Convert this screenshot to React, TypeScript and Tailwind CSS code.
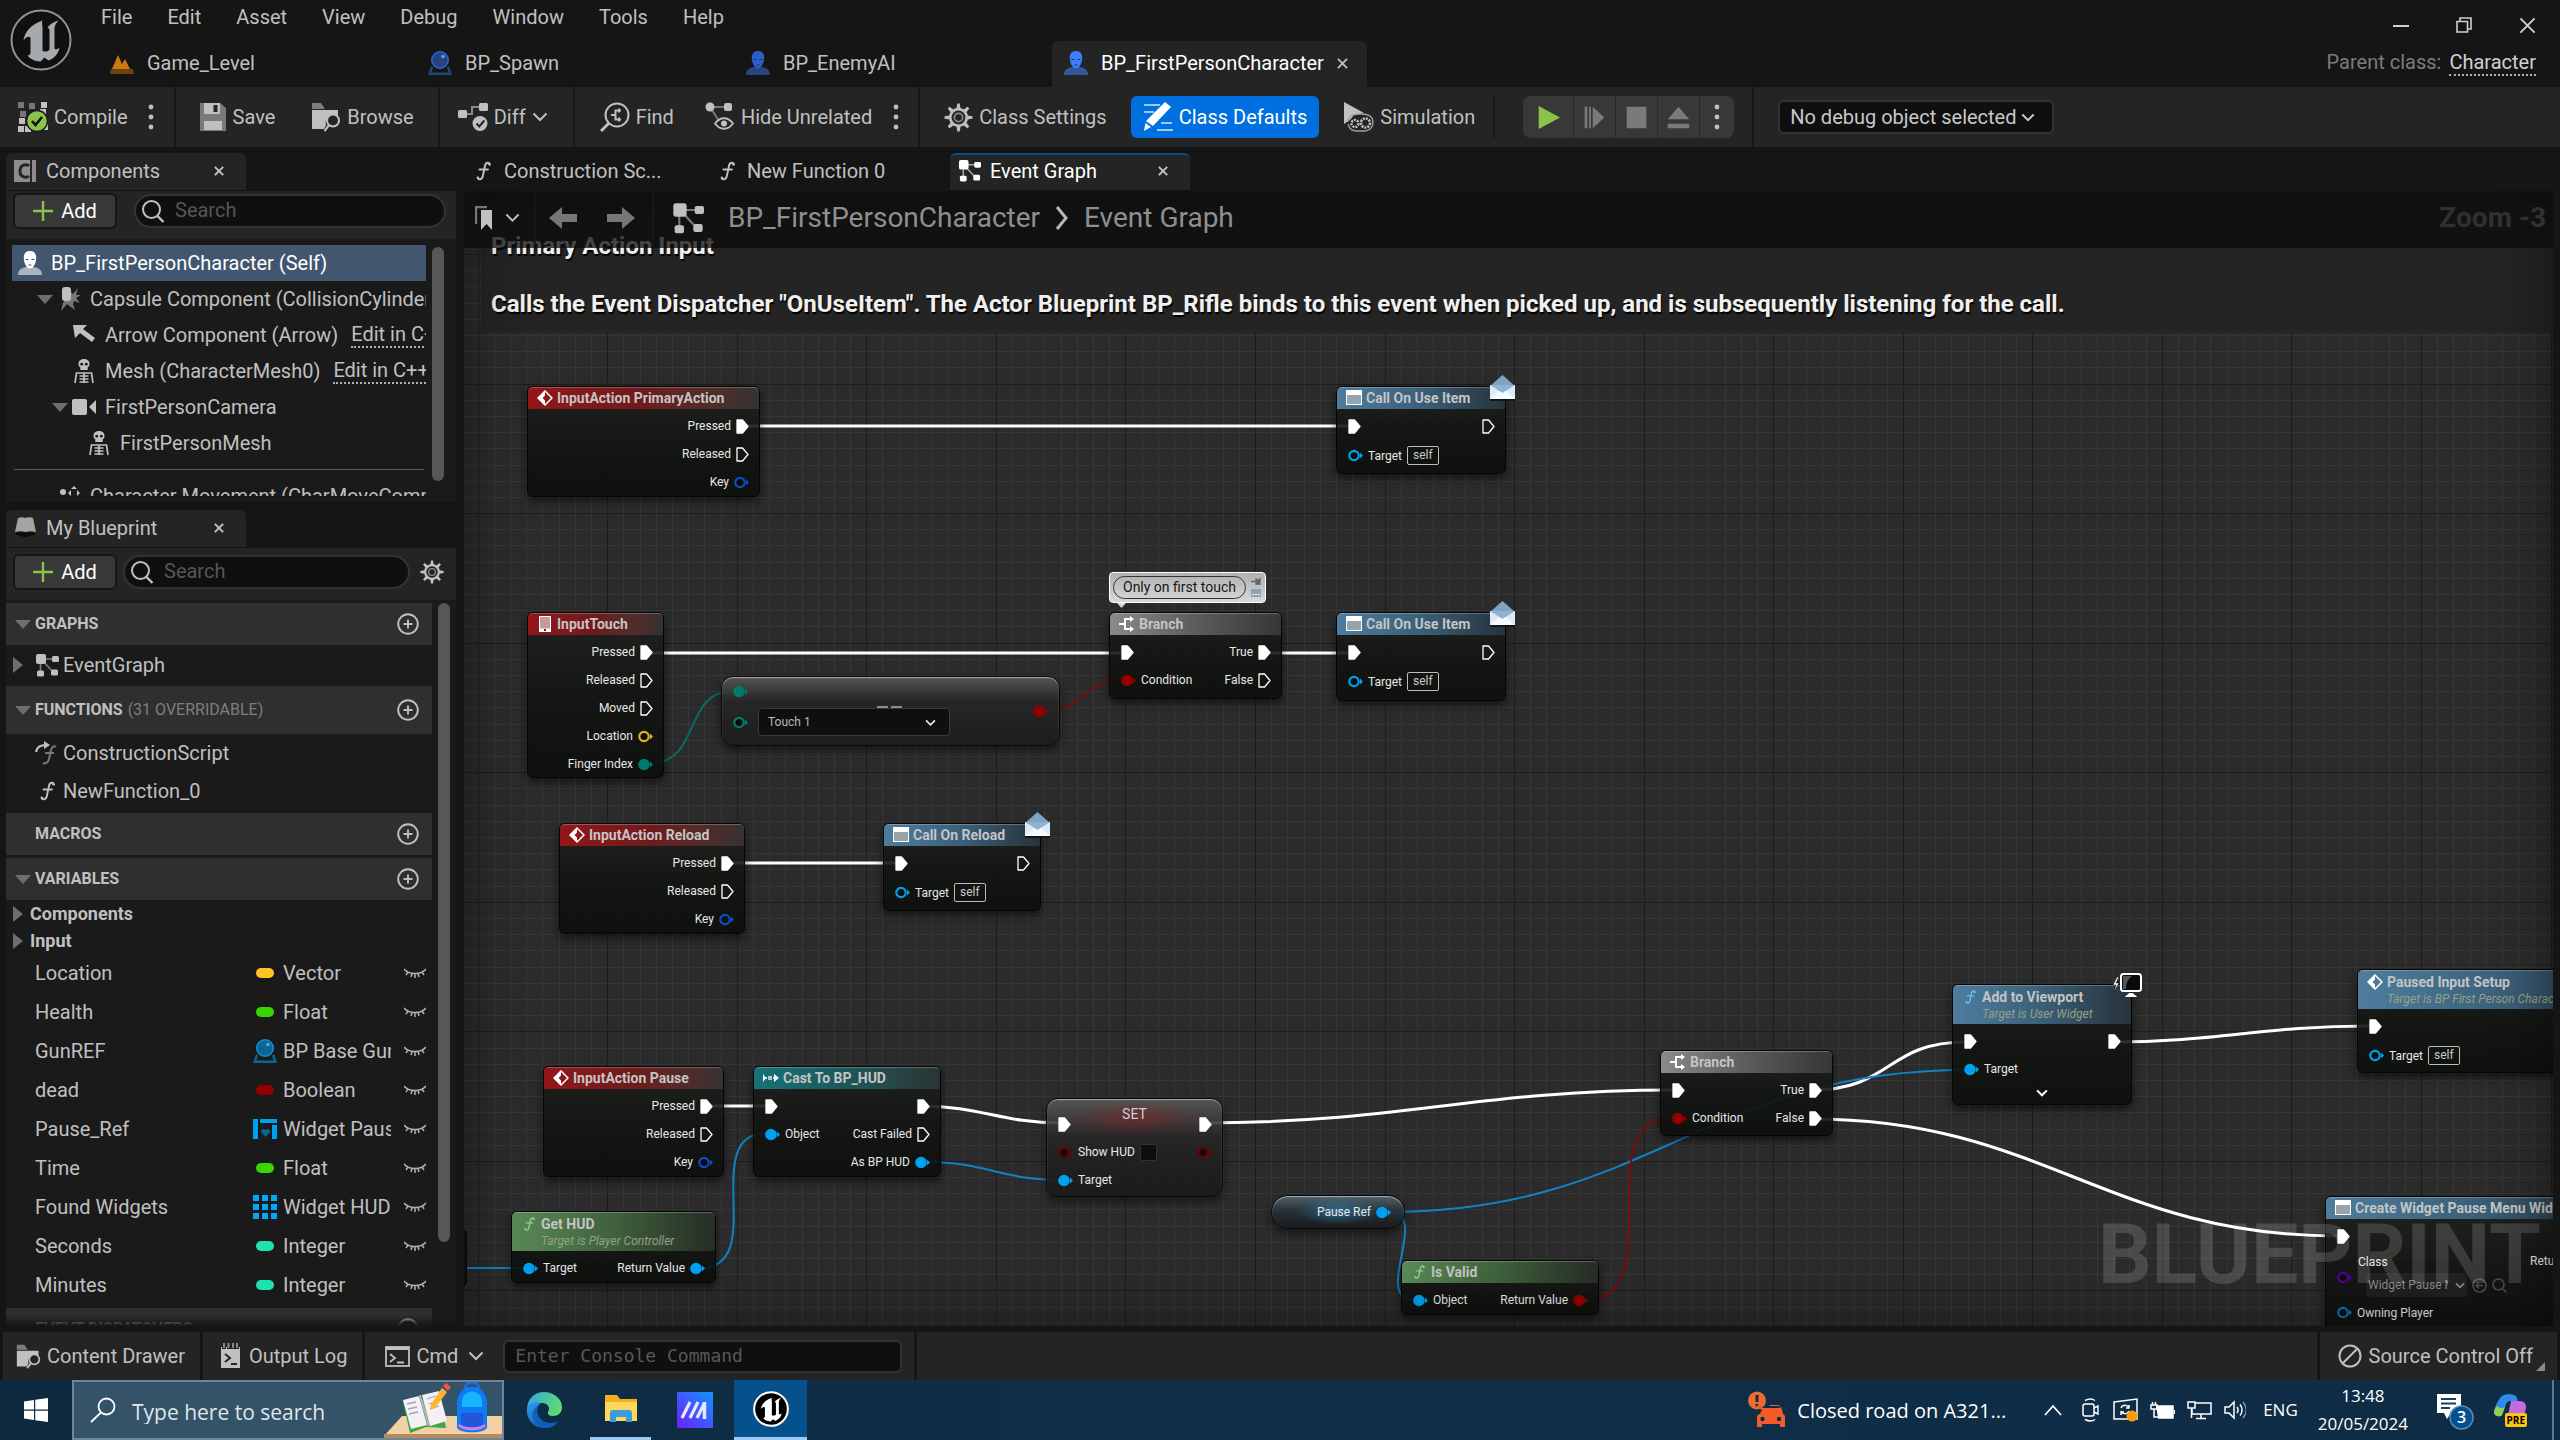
import React from "react";

type Kids = { children?: React.ReactNode };

/* ---------- generic icons ---------- */

function Svg({ w, h, vb, className = "", children }: { w: number; h: number; vb?: string; className?: string } & Kids) {
  return (
    <svg width={w} height={h} viewBox={vb ?? `0 0 ${w} ${h}`} className={`shrink-0 ${className}`} fill="none" aria-hidden="true">
      {children}
    </svg>
  );
}

const Chevron = ({ w = 16, sw = 2 }: { w?: number; sw?: number }) => (
  <Svg w={w} h={w / 2 + 2} vb="0 0 16 10"><path d="M1.5 1.5 8 8l6.500-6.500" stroke="currentColor" strokeWidth={sw} /></Svg>
);
const Dots = () => (
  <Svg w={6} h={26}>{[3, 13, 23].map((y) => <circle key={y} cx="3" cy={y} r="2.400" fill="#c0c0c0" />)}</Svg>
);
const Cross = ({ s = 11, sw = 2 }: { s?: number; sw?: number }) => (
  <Svg w={s} h={s} vb="0 0 12 12"><path d="M1 1l10 10M11 1 1 11" stroke="currentColor" strokeWidth={sw} /></Svg>
);
const TriDown = () => <Svg w={16} h={9}><path d="M0 0h16L8 9z" fill="#6e6e6e" /></Svg>;
const TriRight = () => <Svg w={10} h={16}><path d="M0 0v16l10-8z" fill="#6e6e6e" /></Svg>;
const FnIcon = ({ color = "#c0c0c0", s = 22 }: { color?: string; s?: number }) => (
  <Svg w={s} h={s} vb="0 0 22 22">
    <path d="M18 4.500c-.3-2.300-4.200-2.800-5 1.300l-2.200 10.500c-.8 3.800-4.800 3.600-5.200 1.500M7.500 9.500h8.500" stroke={color} strokeWidth="1.900" strokeLinecap="round" />
    <circle cx="17.300" cy="4.300" r="1.200" fill={color} /><circle cx="6" cy="17.800" r="1.200" fill={color} />
  </Svg>
);
const GraphIcon = ({ s = 24, color = "#c0c0c0" }: { s?: number; color?: string }) => (
  <Svg w={s} h={s} vb="0 0 24 24">
    <path d="M8 6h11M5.500 8v11M8 8l10 11" stroke={color} strokeOpacity=".6" strokeWidth="1.600" />
    <rect x="1" y="1" width="10" height="10" rx="2" fill={color} />
    <rect x="17" y="3" width="7" height="6" rx="1.500" fill={color} />
    <rect x="2" y="17.500" width="7" height="6" rx="1.500" fill={color} />
    <rect x="16" y="16.500" width="7" height="6" rx="1.500" fill={color} />
  </Svg>
);
const SearchIcon = ({ s = 24 }: { s?: number }) => (
  <Svg w={s} h={s} vb="0 0 24 24"><circle cx="10.500" cy="10.500" r="8.500" stroke="#c0c0c0" strokeWidth="2" /><path d="m16.500 17 6 6" stroke="#c0c0c0" strokeWidth="2.400" /></Svg>
);
const Gear = ({ s = 28 }: { s?: number }) => (
  <Svg w={s} h={s} vb="0 0 28 28">
    {[0, 45, 90, 135, 180, 225, 270, 315].map((a) => (
      <path key={a} d="M12 5.500 12.800.500h2.400l.8 5z" fill="#c0c0c0" transform={`rotate(${a} 14 14)`} />
    ))}
    <circle cx="14" cy="14" r="8" stroke="#c0c0c0" strokeWidth="2.600" />
    <circle cx="14" cy="14" r="4" stroke="#8a8a8a" strokeWidth="1.600" />
  </Svg>
);
const Person = ({ head, body, line = "#1c2f5a", s = 24 }: { head: string; body: string; line?: string; s?: number }) => (
  <Svg w={s} h={s} vb="0 0 24 24">
    <path d="M0 24c0-5 3-7 8-8h8c5 1 8 3 8 8z" fill={body} />
    <path d="M12 0c4.500 0 6.500 3 6.200 7.500C18 12.500 15 17.500 12 17.500S6 12.500 5.800 7.500C5.500 3 7.500 0 12 0z" fill={head} />
    <path d="M7.500 8.500h3M13.500 8.500h3M10.500 14h3" stroke={line} strokeWidth="1.200" />
  </Svg>
);
const BallIcon = ({ a, b }: { a: string; b: string }) => (
  <Svg w={24} h={24}>
    <path d="M3 15 0 24h24l-3-9-2 1.500 1.500 5h-17l1.500-5z" fill={b} />
    <circle cx="12" cy="9" r="9" fill={a} /><circle cx="12" cy="9" r="7.500" fill={b} /><circle cx="15" cy="5.500" r="1.800" fill="#5fa0ff" />
  </Svg>
);
const PlusCircle = () => (
  <Svg w={22} h={22}><circle cx="11" cy="11" r="9.800" stroke="#c0c0c0" strokeWidth="1.900" /><path d="M11 6.500v9M6.500 11h9" stroke="#c0c0c0" strokeWidth="1.900" /></Svg>
);
const Skeleton = () => (
  <Svg w={24} h={26}>
    <path d="M12 1c4 0 5.500 2.500 5.500 5 0 2-.8 2.800-1.800 3.200V12H8.300V9.200C7.300 8.800 6.500 8 6.500 6c0-2.500 1.500-5 5.500-5z" fill="#c0c0c0" />
    <circle cx="9.700" cy="6.200" r="1.400" fill="#1a1a1a" /><circle cx="14.300" cy="6.200" r="1.400" fill="#1a1a1a" />
    <path d="M3 25l1.500-10h15L21 25M12 15v10M7.500 18h9M7.500 21h9M7.500 24h9" stroke="#c0c0c0" strokeWidth="1.700" />
  </Svg>
);
const FolderSearch = ({ s = 30 }: { s?: number }) => (
  <Svg w={s} h={s} vb="0 0 30 30">
    <path d="M1 1h9l4 6H1z" fill="#7d7d7d" /><path d="M1 8h26v6a8 8 0 0 0-12 9l-2 4H1z" fill="#c0c0c0" />
    <circle cx="22" cy="18.500" r="6" stroke="#c0c0c0" strokeWidth="2" /><path d="m18 23-4.500 6" stroke="#c0c0c0" strokeWidth="2.200" />
  </Svg>
);

/* ---------- title bar ---------- */

const UMark = ({ fill = "#c9c9c9" }: { fill?: string }) => (
  <path
    d="M34 16C22 20 16 28 15 36c2-3 5-5 7-3v14c0 3-1 4-3 4 4 5 10 6 13 6l4-4 4 3c6-2 10-7 11-13-2 2-5 3-5 0V24c0-3 2-6 4-8-4 1-8 3-11 7 2 1 2 2 2 4v18c-1 2-5 3-7 1V24c0-4-1-6 0-8z"
    fill={fill} transform="translate(-1.500 -4.500)"
  />
);

const menus = ["File", "Edit", "Asset", "View", "Debug", "Window", "Tools", "Help"];

function TitleBar() {
  return (
    <header className="flex h-[87px] shrink-0 bg-[#151515]">
      <div className="flex w-[98px] shrink-0 items-start pt-[9px] pl-[10px]">
        <Svg w={62} h={62} vb="0 0 62 62">
          <circle cx="31" cy="31" r="29.500" fill="#101010" stroke="#8f9394" strokeWidth="2" />
          <UMark fill="#a5aaac" />
        </Svg>
      </div>
      <div className="flex min-w-0 flex-1 flex-col justify-between">
        <nav className="flex h-[34px] items-center gap-[35px] pl-[3px]">
          {menus.map((m) => <button key={m} type="button">{m}</button>)}
        </nav>
        <div role="tablist" className="flex h-[46px] gap-[3px]">
          <DocTab label="Game_Level" icon={
            <Svg w={24} h={24}><path d="M2 18 8 4l4 9 3-5 5 10z" fill="#c97a12" /><path d="M1 18h22l1 5H0z" fill="#6b430f" /></Svg>} />
          <DocTab label="BP_Spawn" icon={<BallIcon a="#2e62cf" b="#27447f" />} />
          <DocTab label="BP_EnemyAI" icon={<Person head="#2c5ecb" body="#27447f" />} />
          <DocTab active label="BP_FirstPersonCharacter" icon={<Person head="#3f7dff" body="#33569d" />} />
        </div>
      </div>
      <div className="flex shrink-0 flex-col items-end justify-between pr-[24px]">
        <div className="flex h-[50px] items-center gap-[47px] text-[#d0d0d0]">
          <button type="button" aria-label="Minimize"><Svg w={16} h={16}><path d="M0 9h16" stroke="currentColor" strokeWidth="2" /></Svg></button>
          <button type="button" aria-label="Restore"><Svg w={16} h={16}><path d="M1 4.500h10.500V15H1zM4 4.500V1h11v11h-3.500" stroke="currentColor" strokeWidth="1.600" /></Svg></button>
          <button type="button" aria-label="Close"><Cross s={17} sw={1.3} /></button>
        </div>
        <div className="flex h-[37px] items-start gap-2">
          <span className="leading-6 text-[#7c7c7c]">Parent class:</span>
          <a href="#character" className="border-b-2 border-dotted border-[#b0b0b0] leading-6 text-[#d0d0d0]">Character</a>
        </div>
      </div>
    </header>
  );
}

function DocTab({ label, icon, active }: { label: string; icon: React.ReactNode; active?: boolean }) {
  return (
    <div role="tab" aria-selected={!!active} className={`flex w-[315px] items-center gap-[13px] pb-[2px] pl-3 ${active ? "rounded-t-md bg-[#242424] text-white" : ""}`}>
      {icon}
      <span>{label}</span>
      {active && <button type="button" aria-label="Close tab" className="text-[#c0c0c0]"><Cross /></button>}
    </div>
  );
}

/* ---------- toolbar ---------- */

const Tool = ({ icon, label, children, className = "" }: { icon: React.ReactNode; label: string; className?: string } & Kids) => (
  <button type="button" className={`flex items-center gap-[6px] whitespace-nowrap ${className}`}>{icon}<span>{label}</span>{children}</button>
);
const Sep = ({ className = "" }: { className?: string }) => <div className={`w-[2px] shrink-0 self-stretch bg-[#171717] ${className}`} />;

function Toolbar() {
  return (
    <div className="flex h-[60px] shrink-0 items-center bg-[#242424]">
      <Tool className="ml-[18px]" label="Compile" icon={
        <Svg w={30} h={30}>
          {[[0, 0, "#777"], [11, 1, "#777"], [23, 0, "#c0c0c0"], [2, 9, "#777"], [22, 7, "#c0c0c0"], [1, 16, "#c0c0c0"], [0, 24, "#c0c0c0"], [7, 24, "#c0c0c0"], [24, 22, "#c0c0c0"]].map(([x, y, c], i) => (
            <rect key={i} x={x} y={y} width="6" height="6" fill={c as string} />
          ))}
          <circle cx="19" cy="19" r="10.500" fill="#8bc34a" stroke="#1c1c1c" strokeWidth="1.500" />
          <path d="m14 19 3.500 4 6.500-8" stroke="#111" strokeWidth="2.600" />
        </Svg>} />
      <button type="button" aria-label="Compile options" className="mx-5"><Dots /></button>
      <Sep />
      <Tool className="ml-[23px]" label="Save" icon={
        <Svg w={28} h={28}>
          <path d="M1 0h20l6 5v23H1z" fill="#7a7a7a" /><path d="M5 0h16v11H5z" fill="#c0c0c0" /><path d="M14.500 2h4v7h-4z" fill="#242424" /><path d="M5 18h18v9H5z" fill="#c0c0c0" />
        </Svg>} />
      <Tool className="ml-[36px]" label="Browse" icon={<FolderSearch />} />
      <Sep className="ml-[24px]" />
      <Tool className="ml-[18px]" label="Diff" icon={
        <Svg w={30} h={30}>
          <path d="M7 12h7V5h8" stroke="#8a8a8a" strokeWidth="2" /><rect y="8" width="9" height="8" rx="1.500" fill="#c0c0c0" /><rect x="21" y="1" width="9" height="8" rx="1.500" fill="#c0c0c0" />
          <circle cx="22" cy="21.500" r="7.500" fill="#c0c0c0" /><path d="m18.500 21.500 2.800 3 5-6" stroke="#242424" strokeWidth="2" />
        </Svg>}><Chevron /></Tool>
      <Sep className="ml-[25px]" />
      <Tool className="ml-[25px]" label="Find" icon={
        <Svg w={30} h={30}>
          <circle cx="17" cy="13" r="11.500" stroke="#c0c0c0" strokeWidth="2" /><path d="m9 21-8 8" stroke="#c0c0c0" strokeWidth="3" />
          <path d="M11 13h4M21 8.500h-5.500v9H21M19 6.500v4M19 15.500v4" stroke="#c0c0c0" strokeWidth="2" />
        </Svg>} />
      <Tool className="ml-[31px]" label="Hide Unrelated" icon={
        <Svg w={30} h={30}>
          <path d="M5 5h18M5 5l9 14" stroke="#777" strokeWidth="2" /><circle cx="5" cy="5" r="4.500" fill="#c0c0c0" /><rect x="19" y="1" width="8" height="8" rx="2" fill="#c0c0c0" />
          <path d="M10 21.500c5-7 13-7 18 0-5 7-13 7-18 0z" stroke="#c0c0c0" strokeWidth="1.800" /><circle cx="19" cy="21.500" r="3" fill="#c0c0c0" />
        </Svg>} />
      <button type="button" aria-label="Hide options" className="mr-[19px] ml-[21px]"><Dots /></button>
      <Sep />
      <Tool className="ml-[24px]" label="Class Settings" icon={<Gear s={29} />} />
      <Tool className="ml-[24px] h-[42px] rounded-md bg-[#0070e0] px-3 text-white" label="Class Defaults" icon={
        <Svg w={30} h={30}>
          <path d="M1 3h16M1 10h10M18 21h11M14 28h16" stroke="#9cc8f5" strokeWidth="1.800" /><path d="M22 1l6 5L10 25l-7-5z" fill="#fff" transform="translate(0 -1)" /><path d="M2.500 21 8 25l-7 4z" fill="#fff" />
        </Svg>} />
      <Tool className="ml-[25px]" label="Simulation" icon={
        <Svg w={30} h={30}>
          <path d="M0 0v22l6-4 4-5 10-2z" fill="#c0c0c0" /><path d="M4 19c2-7 8-7 13-7 8 0 12 3 12 8 0 6-4 9-9 9h-7c-5 0-8-3-9-7" stroke="#a0a0a0" strokeWidth="1.300" />
          <circle cx="11" cy="21.500" r="3.500" stroke="#c0c0c0" strokeWidth="2.400" strokeDasharray="2 1" /><circle cx="21.500" cy="21" r="4.500" stroke="#c0c0c0" strokeWidth="2.600" strokeDasharray="2 1" />
        </Svg>} />
      <Sep className="my-[9px] ml-[18px]" />
      <div className="ml-[28px] flex h-[42px] items-stretch overflow-hidden rounded-lg bg-[#383838] text-[#7a7a7a]">
        <PlayBtn label="Play" className="w-[51px]"><path d="M3 1v26l24-13z" fill="#8bc34a" /></PlayBtn>
        <PlayBtn label="Step" className="w-[42px]"><path d="M3 2h3v24H3zM8 2h2v24H8zM12 2v24l13-12z" fill="currentColor" /></PlayBtn>
        <PlayBtn label="Stop" className="w-[42px]"><path d="M3 2h22v24H3z" fill="currentColor" /></PlayBtn>
        <PlayBtn label="Eject" className="w-[42px]"><path d="M14 2 26 16H2zM2 21h24v5H2z" fill="currentColor" /></PlayBtn>
        <button type="button" aria-label="Play options" className="flex w-[34px] items-center justify-center"><Dots /></button>
      </div>
      <Sep className="ml-[18px]" />
      <div className="relative ml-[24px] text-[#c8c8c8]">
        <select aria-label="Debug object" className="h-[34px] w-[276px] appearance-none rounded-md border-2 border-[#333] bg-[#0f0f0f] pb-px pl-[10px] outline-none">
          <option>No debug object selected</option>
        </select>
        <span className="pointer-events-none absolute top-[13px] right-[19px]"><Chevron w={14} sw={2.400} /></span>
      </div>
    </div>
  );
}
const PlayBtn = ({ label, className, children }: { label: string; className: string } & Kids) => (
  <button type="button" aria-label={label} className={`flex items-center justify-center border-r border-[#2a2a2a] ${className}`}><Svg w={25} h={25} vb="0 0 28 28">{children}</Svg></button>
);

/* ---------- side panels ---------- */

const PanelTab = ({ icon, label }: { icon: React.ReactNode; label: string }) => (
  <div className="flex h-[37px] w-[240px] shrink-0 items-center gap-[10px] rounded-t-md bg-[#242424] pb-[2px] pl-2">
    {icon}<span className="flex-1">{label}</span>
    <button type="button" aria-label={`Close ${label}`} className="mr-[22px]"><Cross s={10} sw={2.400} /></button>
  </div>
);
const AddButton = () => (
  <button type="button" className="flex h-[36px] w-[104px] shrink-0 items-center justify-center gap-2 rounded-md border-2 border-[#151515] bg-[#383838] text-white">
    <Svg w={20} h={20}><path d="M10 0v20M0 10h20" stroke="#8bc34a" strokeWidth="2.400" /></Svg>Add
  </button>
);
const SearchBox = ({ label }: { label: string }) => (
  <label className="flex h-[34px] min-w-0 flex-1 items-center gap-[10px] rounded-full border-2 border-[#333] bg-[#0f0f0f] pl-[5px]">
    <SearchIcon />
    <input aria-label={label} placeholder="Search" className="min-w-0 flex-1 bg-transparent pb-[2px] outline-none placeholder:text-[#565656]" />
  </label>
);

function TreeRow({ pad, tri, icon, text, link, selected }: { pad: string; tri?: boolean; icon: React.ReactNode; text: string; link?: boolean; selected?: boolean }) {
  return (
    <li className={`flex h-9 shrink-0 items-center whitespace-nowrap ${pad} ${selected ? "bg-[#42576f] text-white" : ""}`}>
      {!selected && <span className="mr-1 flex w-4 shrink-0">{tri && <TriDown />}</span>}
      <span className="mr-[9px] flex w-6 shrink-0 justify-center">{icon}</span>
      <span className="shrink-0">{text}</span>
      {link && <a href="#edit" className="ml-[13px] shrink-0 border-b-2 border-dotted border-[#b0b0b0] leading-6">Edit in C++</a>}
    </li>
  );
}

function Components() {
  return (
    <section className="flex flex-col">
      <PanelTab label="Components" icon={
        <Svg w={22} h={22}><path d="M0 0h16v22H0z" fill="#8d8d8d" /><path d="M15 6c-2-2-9-2-9 5s7 7 9 5" stroke="#242424" strokeWidth="3" /><path d="M18 0h4v22h-4z" fill="#8d8d8d" /></Svg>} />
      <div className="mt-px flex h-[311px] flex-col bg-[#242424]">
        <div className="flex items-center gap-[17px] px-[7px] pt-[2px] pr-[10px]"><AddButton /><SearchBox label="Search components" /></div>
        <div className="mt-[10px] flex min-h-0 flex-1 bg-[#1a1a1a] pt-[6px] pb-[6px] pl-[6px]">
          <ul className="flex w-[414px] flex-col overflow-hidden">
            <TreeRow pad="pl-[6px]" selected text="BP_FirstPersonCharacter (Self)" icon={<Person head="#fff" body="#aab4c0" line="#42576f" />} />
            <TreeRow pad="pl-[25px]" tri text="Capsule Component (CollisionCylinder)" icon={
              <Svg w={24} h={24}><path d="m13 4 3 3 5-6-2 7 5 0-5 3 4 5-6-2-1 3 2 6-8-6-6 7 2-8z" fill="#777" /><rect x="5" y="0" width="9" height="14" rx="3" fill="#c0c0c0" /></Svg>} />
            <TreeRow pad="pl-[40px]" link text="Arrow Component (Arrow)" icon={<Svg w={24} h={22}><path d="M1 1h14l-4 4 12 9-3 4L8 9l-5 5z" fill="#c0c0c0" /></Svg>} />
            <TreeRow pad="pl-[40px]" link text="Mesh (CharacterMesh0)" icon={<Skeleton />} />
            <TreeRow pad="pl-[40px]" tri text="FirstPersonCamera" icon={<Svg w={24} h={16}><rect y="0" width="15" height="16" rx="2" fill="#c0c0c0" /><path d="M24 1v14l-7-7z" fill="#c0c0c0" /></Svg>} />
            <TreeRow pad="pl-[55px]" text="FirstPersonMesh" icon={<Skeleton />} />
            <li className="mx-[2px] mt-2 mb-2 h-px shrink-0 bg-[#5a5a5a]" />
            <TreeRow pad="pl-[25px]" text="Character Movement (CharMoveComp)" icon={
              <Svg w={22} h={22}><circle cx="5" cy="7" r="3" fill="#c0c0c0" /><path d="M0 16c0-4 2-5 5-5s5 1 5 5z" fill="#c0c0c0" /><path d="m16 1 3 3h-6zM16 15l3-3h-6zM10 8l3-3v6zM22 8l-3-3v6z" fill="#c0c0c0" /></Svg>} />
          </ul>
          <div className="mt-[2px] ml-[6px] h-[234px] w-3 rounded-full bg-[#575757]" />
        </div>
      </div>
    </section>
  );
}

const SectionHead = ({ label, extra, h = "h-[42px]", tri = true }: { label: string; extra?: string; h?: string; tri?: boolean }) => (
  <div className={`flex shrink-0 items-center bg-[#2f2f2f] pr-[13px] pl-[9px] text-base ${h}`}>
    <span className="mr-1 flex w-4">{tri && <TriDown />}</span>
    <span className="font-bold">{label}</span>
    {extra && <span className="ml-[5px] text-[#7e7e7e]">{extra}</span>}
    <button type="button" aria-label={`Add to ${label}`} className="ml-auto"><PlusCircle /></button>
  </div>
);

const Pill = ({ c }: { c: string }) => <Svg w={18} h={10}><rect width="18" height="10" rx="5" fill={c} /></Svg>;
const variables: [string, string, React.ReactNode][] = [
  ["Location", "Vector", <Pill c="#ffc424" />],
  ["Health", "Float", <Pill c="#38d500" />],
  ["GunREF", "BP Base Gun", <BallIcon a="#1191d6" b="#0b6694" />],
  ["dead", "Boolean", <Pill c="#920101" />],
  ["Pause_Ref", "Widget Pause", <Svg w={24} h={20}><path d="M0 0h5v20H0zM7 0h17v4H7zM19 6h5v14h-5z" fill="#00a0f0" /><path d="M12.500 18 8 13c0-3 3-4 4.500-1.500C14 9 17 10 17 13z" fill="#0b6694" /></Svg>],
  ["Time", "Float", <Pill c="#38d500" />],
  ["Found Widgets", "Widget HUD", <Svg w={24} h={24}>{[0, 9, 18].flatMap((x) => [0, 9, 18].map((y) => <rect key={`${x}-${y}`} x={x} y={y} width="6" height="6" fill="#00a8f7" />))}</Svg>],
  ["Seconds", "Integer", <Pill c="#1fe3af" />],
  ["Minutes", "Integer", <Pill c="#1fe3af" />],
];
const ClosedEye = () => (
  <Svg w={22} h={11}><path d="M0 1c5 6 17 6 22 0M4 4 2 7M8 5.500 7 9M11 6v4M14 5.500 15 9M18 4l2 3" stroke="#b0b0b0" strokeWidth="1.500" /></Svg>
);

function MyBlueprint() {
  return (
    <section className="mt-2 flex min-h-0 flex-1 flex-col">
      <PanelTab label="My Blueprint" icon={
        <Svg w={22} h={22}><path d="M4 1c3-1 5-1 7 0 3-1 6-1 8 0l3 14c-4-1-7-1-10 0-4-1-8-1-11 0z" fill="#a4a4a4" /><path d="M2 16c3-1 7-1 10 0 3-1 7-1 9 0v2c-6 0-7 3-10 2-3 0-6-2-9-2z" fill="#0c0c0c" /></Svg>} />
      <div className="mt-px flex h-[52px] shrink-0 items-center gap-[6px] bg-[#242424] pr-[12px] pb-1 pl-[7px]">
        <AddButton /><SearchBox label="Search blueprint" />
        <button type="button" aria-label="Settings" className="ml-1"><Gear s={24} /></button>
      </div>
      <div className="relative flex min-h-0 flex-1 overflow-hidden bg-[#1a1a1a] pt-[3px]">
        <div className="flex w-[426px] flex-col">
          <SectionHead label="GRAPHS" />
          <div className="flex h-[40px] shrink-0 items-center pl-[7px]"><TriRight /><span className="mr-1 ml-[12px]"><GraphIcon /></span>EventGraph</div>
          <div className="mt-px flex flex-col"><SectionHead label="FUNCTIONS" extra="(31 OVERRIDABLE)" h="h-[48px]" /></div>
          <div className="flex h-[38px] shrink-0 items-center pl-[29px]">
            <Svg w={24} h={24} className="mr-1"><path d="M1 11C2 5 6 4 11 4" stroke="#c0c0c0" strokeWidth="2.200" /><path d="M9 0l6 4-6 4z" fill="#c0c0c0" /><path d="M21 6c-2-2-4 0-5 3l-2 9c-1 4-4 5-6 4M10 12h9" stroke="#777" strokeWidth="2" /></Svg>
            ConstructionScript
          </div>
          <div className="flex h-[38px] shrink-0 items-center pl-[30px]"><span className="mr-[5px]"><FnIcon /></span>NewFunction_0</div>
          <div className="mt-[3px] flex flex-col gap-[3px]">
            <SectionHead label="MACROS" tri={false} />
            <SectionHead label="VARIABLES" />
          </div>
          {["Components", "Input"].map((t) => (
            <div key={t} className="flex h-[27px] shrink-0 items-center gap-[7px] pl-[7px] text-lg font-bold"><TriRight /><span>{t}</span></div>
          ))}
          {variables.map(([name, type, icon]) => (
            <div key={name} className="flex h-[39px] shrink-0 items-center pb-px pl-[29px]">
              <span className="w-[218px]">{name}</span>
              <span className="mr-[6px] flex w-6 justify-center">{icon}</span>
              <span className="mr-[13px] w-[108px] overflow-hidden whitespace-nowrap">{type}</span>
              <ClosedEye />
            </div>
          ))}
          <div className="mt-[3px] flex flex-col"><SectionHead label="EVENT DISPATCHERS" /></div>
        </div>
        <div className="ml-[6px] h-[639px] w-3 rounded-full bg-[#575757]" />
        <div className="pointer-events-none absolute inset-x-0 bottom-0 h-3 bg-linear-to-t from-[#151515] to-transparent" />
      </div>
    </section>
  );
}

/* ---------- graph canvas ---------- */

const view = { x: 464, y: 191 };
const BLUE = "#00a0f0";
const TEAL = "#007a6c";
const RED = "#940000";

type PinT = { k: "exec" | "data"; on?: boolean; c?: string; t?: string; self?: boolean; check?: boolean };
type Row = { l?: PinT; r?: PinT; tall?: boolean };
type NodeT = {
  x: number; y: number; w: number; h: number; title: string; sub?: string;
  tone: "red" | "blue" | "grey" | "teal" | "green"; icon: "event" | "touch" | "panel" | "branch" | "cast" | "fn"; fn?: string;
  rows: Row[]; badge?: "mail" | "screen"; more?: boolean; widget?: boolean;
};

const ex = (t?: string, on = true): PinT => ({ k: "exec", on, t });
const da = (c: string, t?: string, on = true, more: Partial<PinT> = {}): PinT => ({ k: "data", c, t, on, ...more });
const target: Row = { l: da(BLUE, "Target", false, { self: true }), tall: true };
const actionRows: Row[] = [{ r: ex("Pressed") }, { r: ex("Released", false) }, { r: da("#0a4fc0", "Key", false) }];
const callRows: Row[] = [{ l: ex(), r: ex(undefined, false) }, target];

const nodes: NodeT[] = [
  { x: 527, y: 386, w: 233, h: 111, title: "InputAction PrimaryAction", tone: "red", icon: "event", rows: actionRows },
  { x: 1336, y: 386, w: 170, h: 88, title: "Call On Use Item", tone: "blue", icon: "panel", rows: callRows, badge: "mail" },
  { x: 527, y: 612, w: 137, h: 166, title: "InputTouch", tone: "red", icon: "touch", rows: [{ r: ex("Pressed") }, { r: ex("Released", false) }, { r: ex("Moved", false) }, { r: da("#e0b020", "Location", false) }, { r: da(TEAL, "Finger Index") }] },
  { x: 1109, y: 612, w: 173, h: 87, title: "Branch", tone: "grey", icon: "branch", rows: [{ l: ex(), r: ex("True") }, { l: da(RED, "Condition"), r: ex("False", false) }] },
  { x: 1336, y: 612, w: 170, h: 89, title: "Call On Use Item", tone: "blue", icon: "panel", rows: callRows, badge: "mail" },
  { x: 559, y: 823, w: 186, h: 111, title: "InputAction Reload", tone: "red", icon: "event", rows: actionRows },
  { x: 883, y: 823, w: 158, h: 88, title: "Call On Reload", tone: "blue", icon: "panel", rows: callRows, badge: "mail" },
  { x: 543, y: 1066, w: 181, h: 111, title: "InputAction Pause", tone: "red", icon: "event", rows: actionRows },
  { x: 753, y: 1066, w: 188, h: 111, title: "Cast To BP_HUD", tone: "teal", icon: "cast", rows: [{ l: ex(), r: ex() }, { l: da(BLUE, "Object"), r: ex("Cast Failed", false) }, { r: da(BLUE, "As BP HUD") }] },
  { x: 511, y: 1211, w: 205, h: 72, title: "Get HUD", sub: "Target is Player Controller", tone: "green", icon: "fn", fn: "#8fd08a", rows: [{ l: da(BLUE, "Target"), r: da(BLUE, "Return Value") }] },
  { x: 1401, y: 1260, w: 198, h: 55, title: "Is Valid", tone: "green", icon: "fn", fn: "#8fd08a", rows: [{ l: da(BLUE, "Object"), r: da(RED, "Return Value") }] },
  { x: 1660, y: 1050, w: 173, h: 86, title: "Branch", tone: "grey", icon: "branch", rows: [{ l: ex(), r: ex("True") }, { l: da(RED, "Condition"), r: ex("False") }] },
  { x: 1952, y: 984, w: 180, h: 121, title: "Add to Viewport", sub: "Target is User Widget", tone: "blue", icon: "fn", fn: "#6cc0f5", rows: [{ l: ex(), r: ex() }, { l: da(BLUE, "Target") }], badge: "screen", more: true },
  { x: 2357, y: 969, w: 300, h: 104, title: "Paused Input Setup", sub: "Target is BP First Person Character", tone: "blue", icon: "event", rows: [{ l: ex() }, target] },
  { x: 2325, y: 1196, w: 300, h: 160, title: "Create Widget Pause Menu Widget", tone: "blue", icon: "panel", rows: [{ l: ex() }], widget: true },
];

const tones = {
  red: "from-[#941618] via-[#6e1a1c] to-[#363231]",
  blue: "from-[#4f7d9e] via-[#3a5f79] to-[#27333b]",
  grey: "from-[#8a8a8a] via-[#5c5c5c] to-[#363636]",
  teal: "from-[#157377] via-[#1b585a] to-[#2a3434]",
  green: "from-[#5b8a58] via-[#3f613d] to-[#262d25]",
};

function NodeIcon({ kind, fn }: { kind: NodeT["icon"]; fn?: string }) {
  switch (kind) {
    case "event":
      return <Svg w={16} h={16}><path d="M8 1 15 8l-7 7-7-7z" stroke="#fff" strokeWidth="1.500" /><path d="M8 1v4.500L5.500 8 8 10.500V15L1 8z" fill="#fff" /></Svg>;
    case "touch":
      return <Svg w={16} h={16}><rect x="2.500" y=".500" width="11" height="15" fill="#c49a9b" stroke="#fff" /><path d="M2.500 12.500h11v3h-11z" fill="#fff" /><rect x="7" y="13" width="2" height="2" fill="#6a191b" /></Svg>;
    case "panel":
      return <Svg w={16} h={16}><rect x=".500" y=".500" width="15" height="14" fill="#98a3ac" stroke="#fff" /><path d="M0 0h16v5H0z" fill="#fff" /></Svg>;
    case "branch":
      return <Svg w={16} h={16}><path d="M0 8h6M13 3H6v10h7" stroke="#fff" strokeWidth="2" /><path d="m11 0 4 3-4 3zM11 10l4 3-4 3z" fill="#fff" /></Svg>;
    case "cast":
      return <Svg w={16} h={16}><path d="M0 4l3 4-3 4zM11 4l5 4-5 4z" fill="#fff" /><path d="M1 8h3M6 6v4M8 6v4M10 8h3" stroke="#fff" strokeWidth="1.300" /></Svg>;
    default:
      return <FnIcon color={fn} s={16} />;
  }
}

function Pin({ p }: { p: PinT }) {
  if (p.k === "exec")
    return <Svg w={13} h={15}><path d="M1 1h5.500L12 7.500 6.500 14H1z" stroke="#fff" strokeWidth="1.300" strokeLinejoin="round" fill={p.on ? "#fff" : "none"} /></Svg>;
  return (
    <Svg w={15} h={13}><circle cx="6" cy="6.500" r="4.700" stroke={p.c} strokeWidth="2.200" fill={p.on ? p.c : "#0a0c0a"} /><path d="M12 3.500 15 6.500l-3 3z" fill={p.c} /></Svg>
  );
}

const PinLabel = ({ p, right }: { p?: PinT; right?: boolean }) =>
  p ? (
    <div className={`flex items-center gap-[5px] ${right ? "flex-row-reverse" : ""}`}>
      <Pin p={p} />
      {p.t && <span>{p.t}</span>}
      {p.self && <span className="rounded-xs border border-[#bdbdbd] px-[5px] leading-[17px] text-[#c8c8c8]">self</span>}
      {p.check && <input type="checkbox" aria-label={p.t} className="size-[17px] appearance-none rounded-xs border border-[#333] bg-[#0e0e0e]" />}
    </div>
  ) : <span />;

const PinRow = ({ r }: { r: Row }) => (
  <div className={`flex items-center justify-between pr-[10px] pl-[11px] ${r.tall ? "h-[31px]" : "h-7"}`}>
    <PinLabel p={r.l} /><PinLabel p={r.r} right />
  </div>
);

const Mail = () => (
  <Svg w={27} h={26}><path d="M1 11 13.500 0 26 11z" fill="#7ea3c4" /><path d="M1 10h25v14H1z" fill="#dcebf6" /><path d="M1 10l12.500 8L26 10z" fill="#8fb3d1" /><path d="M1 24l9-8 3.500 2 3.500-2 9 8z" fill="#f4faff" /><path d="M1 25h25" stroke="#0c0c0c" strokeWidth="1.500" /></Svg>
);
const Screen = () => (
  <Svg w={30} h={25}>
    <path d="M4 4 0 12h3l-2 7 5-9H3l3-6z" fill="#fff" stroke="#0a0a0a" strokeWidth=".500" />
    <rect x="8" y="1" width="20" height="17" rx="2.500" fill="#0a0a0a" stroke="#fff" strokeWidth="2" /><path d="M10 3h9c-4 3-6 7-6 13h-3z" fill="#555" /><path d="M12 24c1-2 3-2 4-4h4c1 2 3 2 4 4z" fill="#fff" />
  </Svg>
);

function GraphNode({ n }: { n: NodeT }) {
  return (
    <article
      className="absolute flex flex-col rounded-md border border-[#050505] bg-linear-to-b from-[#20221f]/90 via-[#121412]/90 to-[#0c0e0b]/90 text-xs whitespace-nowrap text-[#e8e8e8] shadow-[0_4px_8px_rgba(0,0,0,0.55)]"
      style={{ left: n.x - view.x, top: n.y - view.y, width: n.w, height: n.h }}
    >
      <div className={`flex shrink-0 gap-1 rounded-t-[5px] border-t border-white/25 bg-linear-to-r pl-[9px] ${tones[n.tone]} ${n.sub ? "h-[39px] pt-[3px]" : "h-[22px] items-center pb-[2px]"}`}>
        <NodeIcon kind={n.icon} fn={n.fn} />
        <div className="min-w-0">
          <h3 className="text-sm leading-4 font-bold text-[#c4c4c4]">{n.title}</h3>
          {n.sub && <p className="leading-[18px] text-[#96a184] italic">{n.sub}</p>}
        </div>
      </div>
      <div className="flex flex-col pt-[3px]">{n.rows.map((r, i) => <PinRow key={i} r={r} />)}</div>
      {n.more && <button type="button" aria-label="Show advanced pins" className="mt-[6px] flex justify-center text-white"><Chevron w={12} sw={2.800} /></button>}
      {n.widget && (
        <div className="mt-[3px] flex flex-col">
          <div className="flex items-start gap-[6px] pl-[11px]">
            <span className="mt-[18px]"><Pin p={da("#58009a", undefined, false)} /></span>
            <div>
              <div className="flex w-[200px] justify-between"><label htmlFor="widget-class" className="leading-[18px]">Class</label><span className="w-[28px]">Return</span></div>
              <div className="mt-[2px] flex items-center gap-[5px] pl-2">
                <span className="flex h-6 w-[101px] items-center justify-between rounded-sm bg-white/5 px-[2px] text-[#8a8a8a]">
                  <select id="widget-class" className="w-[80px] appearance-none overflow-hidden bg-transparent outline-none"><option>Widget Pause Menu</option></select>
                  <Chevron w={10} sw={2.800} />
                </span>
                <Svg w={15} h={15}><circle cx="7.500" cy="7.500" r="6.500" stroke="#4c4c4c" strokeWidth="1.600" /><path d="M11 7.500H4M7 4.500l-3 3 3 3" stroke="#4c4c4c" strokeWidth="1.600" /></Svg>
                <Svg w={15} h={15}><circle cx="6.500" cy="6.500" r="5.500" stroke="#4c4c4c" strokeWidth="1.500" /><path d="m10.500 10.500 4 4" stroke="#4c4c4c" strokeWidth="1.600" /></Svg>
              </div>
            </div>
          </div>
          <PinRow r={{ l: da("#0878b4", "Owning Player", false), tall: true }} />
        </div>
      )}
      {n.badge === "mail" && <span className="absolute -top-3 -right-[11px]"><Mail /></span>}
      {n.badge === "screen" && <span className="absolute -top-[12px] -right-[12px]"><Screen /></span>}
    </article>
  );
}

/* Wire end points, control distance, colour and width. */
const wires: [number, number, number, number, number, string, number][] = [
  [740, 426, 1350, 426, 100, "#fff", 3],
  [643, 653, 1125, 653, 100, "#fff", 3],
  [1262, 653, 1350, 653, 20, "#fff", 3],
  [725, 863, 897, 863, 40, "#fff", 3],
  [704, 1106, 767, 1106, 20, "#fff", 3],
  [921, 1106, 1061, 1123, 60, "#fff", 3],
  [1202, 1123, 1674, 1090, 200, "#fff", 3],
  [1812, 1090, 1966, 1042, 80, "#fff", 3],
  [1812, 1119, 2338, 1236, 230, "#fff", 3],
  [2110, 1042, 2370, 1026, 110, "#fff", 3],
  [651, 763, 733, 691, 50, "#0a6a60", 2],
  [1045, 711, 1123, 680, 40, "#780c0c", 2],
  [700, 1268, 767, 1133, 70, "#1183c2", 2],
  [926, 1162, 1061, 1180, 60, "#1183c2", 2],
  [1388, 1212, 1966, 1070, 260, "#1183c2", 2],
  [1388, 1212, 1415, 1300, 45, "#1183c2", 2],
  [1584, 1300, 1674, 1117, 90, "#780c0c", 2],
  [420, 1268, 526, 1268, 30, "#1183c2", 2],
];

function Grid() {
  const line = (i: number, off: number) => Math.round(off + i * 16.195);
  const idx = Array.from({ length: 320 }, (_, i) => i);
  return (
    <svg className="absolute inset-0 h-full w-full" shapeRendering="crispEdges" aria-hidden="true">
      {idx.map((i) => <path key={`m${i}`} d={`M${line(i, 13.6)} 0v4000M0 ${line(i, 14.4)}h6000`} stroke="#363636" />)}
      {idx.filter((i) => i % 8 === 0).map((i) => <path key={`M${i}`} d={`M${line(i, 13.6)} 0v4000M0 ${line(i + 3, 14.4)}h6000`} stroke="#1d1d1d" />)}
    </svg>
  );
}

const at = (x: number, y: number, w: number, h: number) => ({ left: x - view.x, top: y - view.y, width: w, height: h });
const glossy = "absolute border border-[#0a0a0a] bg-linear-to-b text-xs text-[#e8e8e8] whitespace-nowrap shadow-[0_4px_8px_rgba(0,0,0,0.5),inset_0_1px_1px_rgba(255,255,255,0.5)]";

function CompactNodes() {
  return (
    <>
      <article className={`${glossy} flex items-center justify-between rounded-xl from-[#5a5a5a]/90 via-[#262626]/90 via-35% to-[#1c1c1c]/95 px-[11px]`} style={at(721, 676, 339, 70)}>
        <div className="flex flex-col pb-[9px]">
          <div className="flex h-[31px] items-center"><Pin p={da(TEAL)} /></div>
          <div className="flex h-[31px] items-center gap-[10px]">
            <Pin p={da(TEAL, undefined, false)} />
            <span className="relative flex">
              <select aria-label="Touch index" className="h-7 w-[192px] appearance-none rounded-sm border border-[#3a3a3a] bg-[#0f0f0f] pl-[9px] text-[#b8b8b8] outline-none"><option>Touch 1</option></select>
              <span className="pointer-events-none absolute top-[11px] right-[14px]"><Chevron w={11} sw={2.400} /></span>
              <span className="absolute -top-[2px] left-[119px] flex gap-[3px]"><i className="h-[2px] w-[11px] bg-[#8c8c8c]" /><i className="h-[2px] w-[11px] bg-[#8c8c8c]" /></span>
            </span>
          </div>
        </div>
        <Pin p={da(RED)} />
      </article>
      <article className={`${glossy} rounded-xl from-[#5a5a5a]/90 via-[#262424]/90 via-40% to-[#1a1a1a]/95`} style={at(1046, 1098, 177, 99)}>
        <div className="absolute inset-x-5 top-px h-9 bg-radial from-[#a01a1e]/40 to-transparent to-70%" />
        <h3 className="absolute inset-x-0 top-[7px] text-center text-sm leading-4 text-[#cfcfcf]">SET</h3>
        <div className="relative pt-[11px]">
          <PinRow r={{ l: ex(), r: ex() }} />
          <PinRow r={{ l: da("#700000", "Show HUD", false, { check: true }), r: da("#700000", undefined, false) }} />
          <PinRow r={{ l: da(BLUE, "Target") }} />
        </div>
      </article>
      <article className={`${glossy} flex items-center justify-end rounded-full from-[#5a6870]/90 via-[#26323a]/90 via-45% to-[#1a1a1a]/95 pr-[13px]`} style={at(1271, 1195, 134, 34)}>
        <div className="absolute inset-x-6 top-px h-7 rounded-full bg-radial from-[#2a8cc0]/60 to-transparent to-70%" />
        <div className="relative"><PinLabel p={da(BLUE, "Pause Ref")} right /></div>
      </article>
      <article className="absolute rounded-md border border-[#050505] bg-[#10160f]" style={at(330, 1229, 137, 58)} />
      <div className="absolute flex items-center gap-2 rounded-sm border border-white bg-linear-to-b from-[#b0b0b0] to-[#d8d8d8] pl-[3px]" style={at(1109, 572, 157, 31)}>
        <span className="flex h-[23px] items-center rounded-full border border-[#333] px-[9px] pb-px text-sm text-[#161616]">Only on first touch</span>
        <Svg w={10} h={22} className="-ml-[3px]"><path d="M0 4.500h5M5 1v7M9 1v7M5 3h4v4H5" stroke="#666" strokeWidth="1.300" fill="#666" /><rect y="12" width="10" height="8" fill="#8fa3b3" /><path d="M1 17.500h8" stroke="#fff" strokeDasharray="2 1" /></Svg>
        <Svg w={10} h={6} className="absolute top-[30px] left-[7px]"><path d="M0 0h9L4.500 5z" fill="#d8d8d8" /></Svg>
      </div>
    </>
  );
}

function Graph() {
  return (
    <main className="relative mr-[7px] min-h-0 flex-1 overflow-hidden bg-[#2b2b2b]">
      <Grid />
      <section className="absolute top-0 right-0 left-[17px] flex h-[142px] flex-col justify-end bg-[#242424] pb-[14px] pl-[10px] text-2xl leading-[29px] font-bold whitespace-pre text-[#f0f0f0] [text-shadow:1px_2px_1px_#000]">
        <h2>Primary Action Input</h2>
        <p className="mt-[29px]">Calls the Event Dispatcher "OnUseItem". The Actor Blueprint BP_Rifle binds to this event when picked up, and is subsequently listening for the call.</p>
      </section>
      <svg className="absolute inset-0 h-full w-full" fill="none" aria-hidden="true">
        <g transform={`translate(${-view.x} ${-view.y})`}>
          {wires.map(([x1, y1, x2, y2, c, col, sw], i) => (
            <path key={i} d={`M${x1} ${y1}C${x1 + c} ${y1} ${x2 - c} ${y2} ${x2} ${y2}`} stroke={col} strokeWidth={sw} />
          ))}
        </g>
      </svg>
      {nodes.map((n, i) => <GraphNode key={i} n={n} />)}
      <CompactNodes />
      <div className="pointer-events-none absolute right-[12px] bottom-[29px] text-[84px] leading-none font-bold text-white/15">BLUEPRINT</div>
      <div className="pointer-events-none absolute inset-0 shadow-[inset_0_0_60px_rgba(0,0,0,0.45)]" />
      <div className="absolute inset-x-0 top-0 flex h-[57px] items-center bg-[#0c0c0c]/75 pb-[3px] pl-[11px] text-[#8f8f8f]">
        <button type="button" aria-label="Bookmarks" className="flex items-center gap-3 text-[#c0c0c0]">
          <Svg w={18} h={24}><path d="M1 18V1h11" stroke="#777" strokeWidth="2.400" /><path d="M6 4h11v20l-5.500-6L6 24z" fill="#c0c0c0" /></Svg><Chevron w={15} />
        </button>
        <Sep className="ml-[14px] bg-[#1c1c1c]" />
        <button type="button" aria-label="Back" className="ml-[13px]"><Svg w={28} h={22}><path d="M0 11 13 0v7h15v8H13v7z" fill="#777" /></Svg></button>
        <button type="button" aria-label="Forward" className="ml-[30px]"><Svg w={28} h={22}><path d="M28 11 15 0v7H0v8h15v7z" fill="#777" /></Svg></button>
        <Sep className="ml-[17px] bg-[#1c1c1c]" />
        <span className="mr-[24px] ml-[18px]"><GraphIcon s={32} /></span>
        <span className="text-[28px]">BP_FirstPersonCharacter</span>
        <Svg w={14} h={24} className="mx-[15px]"><path d="m2 1 9 11-9 11" stroke="#b8b8b8" strokeWidth="3" /></Svg>
        <span className="text-[28px]">Event Graph</span>
        <span className="mr-[7px] ml-auto text-[28px] font-bold text-[#303030]">Zoom -3</span>
      </div>
    </main>
  );
}

/* ---------- status bar ---------- */

function StatusBar() {
  const cell = "flex items-center bg-[#242424] h-full whitespace-nowrap";
  return (
    <footer className="flex h-[48px] shrink-0 gap-[3px] px-[3px]">
      <button type="button" className={`${cell} gap-[6px] pr-[15px] pl-[13px]`}><FolderSearch s={25} />Content Drawer</button>
      <button type="button" className={`${cell} gap-[9px] pr-[15px] pl-[18px]`}>
        <Svg w={19} h={26}><path d="M0 4h19v21H0z" fill="#c0c0c0" /><path d="M3 0v6M8 0v6M12 0v6M16 0v6" stroke="#242424" strokeWidth="4" /><path d="M3 0v5M7.500 0v5M12 0v5M16 0v5" stroke="#888" strokeWidth="2" /><path d="m4 11 5 4-5 4M10 21h6" stroke="#242424" strokeWidth="2" /></Svg>
        Output Log
      </button>
      <div className={`${cell} w-[549px] pr-3 pl-[20px]`}>
        <button type="button" className="mr-[19px] flex items-center gap-[6px]">
          <Svg w={25} h={21}><rect x="1" y="1" width="23" height="19" stroke="#c0c0c0" strokeWidth="1.800" /><path d="M1 2.500h23" stroke="#c0c0c0" strokeWidth="3" /><path d="m5 8 5 4-5 4M12 16.500h7" stroke="#c0c0c0" strokeWidth="1.800" /></Svg>
          <span className="mr-1">Cmd</span><Chevron />
        </button>
        <input aria-label="Console command" placeholder="Enter Console Command" className="h-[33px] min-w-0 flex-1 rounded-md border-2 border-[#333] bg-[#0f0f0f] px-[10px] pb-[2px] font-['DejaVu_Sans_Mono',monospace] text-lg outline-none placeholder:text-[#585858]" />
      </div>
      <div className={`${cell} flex-1`} />
      <button type="button" className={`${cell} relative gap-[7px] pr-6 pl-[18px]`}>
        <Svg w={24} h={24}><circle cx="12" cy="12" r="10.500" stroke="#c0c0c0" strokeWidth="2" /><path d="M5 19 19 5" stroke="#c0c0c0" strokeWidth="2" /></Svg>
        Source Control Off
        <Svg w={9} h={9} className="absolute right-[12px] bottom-[9px]"><path d="M9 0v9H0z" fill="#8a8a8a" /></Svg>
      </button>
    </footer>
  );
}

/* ---------- desktop task bar ---------- */

function TaskBar() {
  return (
    <div className="flex h-[60px] shrink-0 items-stretch bg-linear-to-r from-[#0d2a40] via-[#0f2e48] to-[#0e2c45] font-['Open_Sans','Noto_Sans',sans-serif] text-white">
      <button type="button" aria-label="Start" className="flex w-[72px] items-center justify-center">
        <Svg w={24} h={24}><path d="M0 3.500 10 2v9.500H0zM11.200 1.800 24 0v11.500H11.200zM0 12.700h10V22L0 20.500zM11.200 12.700H24V24l-12.800-1.800z" fill="#fff" /></Svg>
      </button>
      <label className="relative flex w-[432px] items-center overflow-hidden border-2 border-[#6c8598] bg-[#345268] pl-4">
        <Svg w={26} h={26}><circle cx="16.500" cy="9.500" r="8" stroke="#fff" strokeWidth="1.800" /><path d="M11 15.500 1 25" stroke="#fff" strokeWidth="1.800" /></Svg>
        <input aria-label="Taskbar search" placeholder="Type here to search" className="ml-[16px] w-[230px] bg-transparent pt-[3px] text-[21px] outline-none placeholder:text-[#dfe6ea]" />
        <Svg w={118} h={58} className="absolute right-0 bottom-0">
          <path d="M18 36h100v20H0z" fill="#f3cfa4" /><path d="M0 54h118v4H0z" fill="#b58a5c" />
          <g transform="translate(2 0)">
            <path d="m17 22 7 31 16-6 20 1-6-31z" fill="#3fa54a" /><path d="m17 20 16-4 8 29-16 4zM36 15l17-4 8 30-17 5z" fill="#f4f1f5" /><path d="m34 15 9 31" stroke="#b9b3c0" strokeWidth="2" />
            <path d="m21 24 9-2m-8 7 9-2m-8 7 9-2m9-13 9-3m-7 8 9-3m-8 8 9-3" stroke="#a7a2b5" strokeWidth="1.300" />
            <path d="M56 8l5 4-12 16-5 2 1-6z" fill="#ffb62e" /><path d="m57 6 3-3 5 4-3 4z" fill="#f0544a" />
            <path d="M79 9c0-9 14-9 14 0" stroke="#1f6fe0" strokeWidth="3" /><path d="M71 24C71 1 101 1 101 24v23c0 7-30 7-30 0z" fill="#0a7cf5" /><path d="M76 22c0-14 20-14 20 0v5H76z" fill="#19b4ff" /><path d="M75 33h22v12c-5 4-17 4-22 0z" fill="#2456d8" /><path d="M73 45c5 5 21 5 26 0" stroke="#d37be8" strokeWidth="3" />
          </g>
        </Svg>
      </label>
      <button type="button" aria-label="Edge" className="ml-[7px] flex w-[66px] items-center justify-center">
        <Svg w={36} h={36}>
          <defs>
            <linearGradient id="edgeA" x1="0" y1="0" x2="36" y2="14" gradientUnits="userSpaceOnUse"><stop stopColor="#2aa6e8" /><stop offset="1" stopColor="#62dc6a" /></linearGradient>
            <linearGradient id="edgeB" x1="0" y1="12" x2="20" y2="36" gradientUnits="userSpaceOnUse"><stop stopColor="#2f9df0" /><stop offset="1" stopColor="#114fa8" /></linearGradient>
          </defs>
          <path d="M1 16C2 6 9 0 18 0c10 0 18 7 18 15 0 6-4 9-9 9-4 0-6-2-5-4 3-5-1-9-6-9C9 11 3 12 1 16z" fill="url(#edgeA)" />
          <path d="M1 16c2-5 8-7 14-5-5 3-7 14 3 20 5 3 11 1 14-2-3 5-9 7-14 7C8 36 0 28 1 16z" fill="url(#edgeB)" />
          <path d="M13 13c-5 9 2 18 12 18 3 0 6-1 7-2-4 8-15 9-21 3-6-5-6-15 2-19z" fill="#0f60bd" />
        </Svg>
      </button>
      <button type="button" aria-label="File Explorer" className="mr-[19px] ml-[13px] flex w-[61px] items-center justify-center border-b-[3px] border-[#9cc9ef]">
        <Svg w={34} h={28}><path d="M1 0h12l3 4h17v22H1z" fill="#f2b01e" /><path d="M1 7h32v19H1z" fill="#ffd65c" /><path d="M6 27V18c0-2 1-3 3-3h16c2 0 3 1 3 3v9h-6v-5H12v5z" fill="#3b9be0" /></Svg>
      </button>
      <button type="button" aria-label="Studio" className="flex w-[50px] items-center justify-center">
        <Svg w={36} h={36}>
          <defs><linearGradient id="studio" x1="0" y1="36" x2="36" y2="0" gradientUnits="userSpaceOnUse"><stop stopColor="#6a1fff" /><stop offset="1" stopColor="#1493ff" /></linearGradient></defs>
          <path d="M0 0h36v36H0z" fill="url(#studio)" /><path d="m5 26 8-16M13 26l8-16M20 26l7-14" stroke="#e9e6ff" strokeWidth="3.200" /><path d="M27.500 10v17" stroke="#e9e6ff" strokeWidth="3.500" />
        </Svg>
      </button>
      <button type="button" aria-label="Unreal Editor" className="ml-[14px] flex w-[73px] items-center justify-center border-b-[3px] border-[#9cc9ef] bg-[#06508c]">
        <Svg w={36} h={36} vb="0 0 62 62"><circle cx="31" cy="31" r="29" fill="#000" stroke="#fff" strokeWidth="3.500" /><UMark fill="#fff" /></Svg>
      </button>

      <div className="ml-auto flex items-center">
        <button type="button" className="flex items-center gap-3 text-[20px] whitespace-nowrap">
          <Svg w={38} h={38}>
            <circle cx="10" cy="9.500" r="9" fill="#ef6b34" /><path d="M10 4v7M10 13v2.500" stroke="#0e2c45" strokeWidth="3" />
            <path d="M22 15h9c2 0 3 1 4 4l1 4c2 1 2 2 2 4v9h-5v-3H15v3h-5v-9c0-3 1-4 3-4l2-4c-3-1-5-3-5-5h5v3h18l-1-3h-9z" fill="#f25c2b" />
            <circle cx="15.500" cy="28" r="2.200" fill="#0e2c45" /><circle cx="32" cy="28" r="2.200" fill="#0e2c45" />
          </Svg>
          <span className="pt-[2px]">Closed road on A321...</span>
        </button>
        <div className="ml-[38px] flex items-center gap-3">
          <Svg w={18} h={12} className="mr-2"><path d="m1 11 8-9 8 9" stroke="#fff" strokeWidth="1.700" /></Svg>
          <Svg w={17} h={24} className="mr-[2px]"><rect x="1" y="6" width="11" height="12" rx="2" stroke="#fff" strokeWidth="1.500" /><path d="m12 10 4-2v8l-4-2M3 2.500c4-2 7-2 10 0M3 21.500c4 2 7 2 10 0" stroke="#fff" strokeWidth="1.400" /></Svg>
          <Svg w={25} h={24}><path d="M1 4 24 1v20L1 21z" stroke="#fff" strokeWidth="1.500" /><path d="M8 10c2-4 7-3 8 0M16 7v3h-3M16 13c-2 4-7 3-8 0M8 17v-3h3" stroke="#fff" strokeWidth="1.500" /><circle cx="19" cy="18" r="5.500" fill="#ff9a0a" /></Svg>
          <Svg w={25} h={18}><path d="M6 5h17v12H8" stroke="#fff" strokeWidth="1.500" fill="#fff" /><path d="M1 4h6v4H1zM2.500 1v3M5.500 1v3M4 8v8h4M24.500 9v4" stroke="#fff" strokeWidth="1.500" /></Svg>
          <Svg w={25} h={20}><path d="M8 3h16v11H5V9M14 14v4M9 18.500h10M1 2h7v6H1zM4.500 8v10" stroke="#fff" strokeWidth="1.500" /></Svg>
          <Svg w={22} h={20} className="mr-[5px]"><path d="M1 7h4l5-5v16l-5-5H1z" stroke="#fff" strokeWidth="1.500" /><path d="M13 7c1.500 2 1.500 4 0 6M16 4.500c3 4 3 7 0 11" stroke="#fff" strokeWidth="1.400" /><path d="M19 2c4 5 4 11 0 16" stroke="#7c92a4" strokeWidth="1.400" /></Svg>
          <span className="text-[17px]">ENG</span>
        </div>
        <div className="ml-[20px] flex flex-col items-center text-[17px] leading-7"><span>13:48</span><span>20/05/2024</span></div>
        <button type="button" aria-label="3 notifications" className="relative ml-[29px]">
          <Svg w={37} h={40}>
            <path d="M0 4h24v19H14l-4 6-3-6H0z" fill="#fff" /><path d="M4 9h15M4 13.500h15M4 18h9" stroke="#1d3f5c" strokeWidth="1.800" /><circle cx="24.500" cy="27.500" r="11.500" fill="#04508e" stroke="#5e8db4" strokeWidth="1.500" />
          </Svg>
          <span className="absolute top-[17px] left-[20px] text-[16px] leading-5 font-semibold">3</span>
        </button>
        <button type="button" aria-label="Copilot preview" className="relative ml-[20px]">
          <Svg w={33} h={32}>
            <path d="M8 2C10 0 18 0 20 1c3 1 3 4 4 6l-8 0c-3 0-4 3-5 6l-3 8c-1 2-8 2-8-3C0 14 5 4 8 2z" fill="#2f8bea" /><path d="M3 12c3 3 6 2 8 1l-3 8c-1 2-8 2-8-3 0-1 1-4 3-6z" fill="#8ed04a" />
            <path d="M17 7h9c4 0 6 3 6 6 0 4-4 14-7 16-3 1-9 1-11 0-2-2-2-4 0-8z" fill="#c46be0" /><path d="M20 20h11c-1 5-4 9-7 9h-8z" fill="#f2717a" />
          </Svg>
          <span className="absolute right-0 -bottom-px rounded-xs bg-[#ffc20e] px-[2px] text-[10px] leading-[14px] font-bold text-black">PRE</span>
        </button>
        <div className="mr-[6px] ml-[25px] h-[60px] w-[2px] bg-[#60778a]" />
      </div>
    </div>
  );
}

/* ---------- page ---------- */

export default function App() {
  return (
    <div className="flex h-screen flex-col overflow-hidden bg-[#151515] font-['Roboto',sans-serif] text-xl leading-6 text-[#c0c0c0]">
      <TitleBar />
      <Toolbar />
      <div className="flex min-h-0 flex-1 pt-[6px] pb-[6px]">
        <aside className="mr-2 ml-[6px] flex w-[450px] shrink-0 flex-col"><Components /><MyBlueprint /></aside>
        <div className="flex min-w-0 flex-1 flex-col">
          <div role="tablist" className="mb-px flex h-[37px] shrink-0 items-center">
            <button type="button" role="tab" className="ml-[8px] flex w-[244px] items-center gap-[10px] pb-[2px]"><FnIcon />Construction Sc...</button>
            <button type="button" role="tab" className="flex w-[234px] items-center gap-[9px] pb-[2px]"><FnIcon />New Function 0</button>
            <div role="tab" aria-selected="true" className="flex h-full w-[240px] items-center gap-[9px] rounded-t-md border-t-2 border-[#0b4c8f] bg-[#242424] pb-[4px] pl-2 text-white">
              <GraphIcon s={23} color="#fff" /><span className="flex-1">Event Graph</span>
              <button type="button" aria-label="Close Event Graph" className="mr-[22px] text-[#c0c0c0]"><Cross s={10} sw={2.400} /></button>
            </div>
          </div>
          <Graph />
        </div>
      </div>
      <StatusBar />
      <TaskBar />
    </div>
  );
}
